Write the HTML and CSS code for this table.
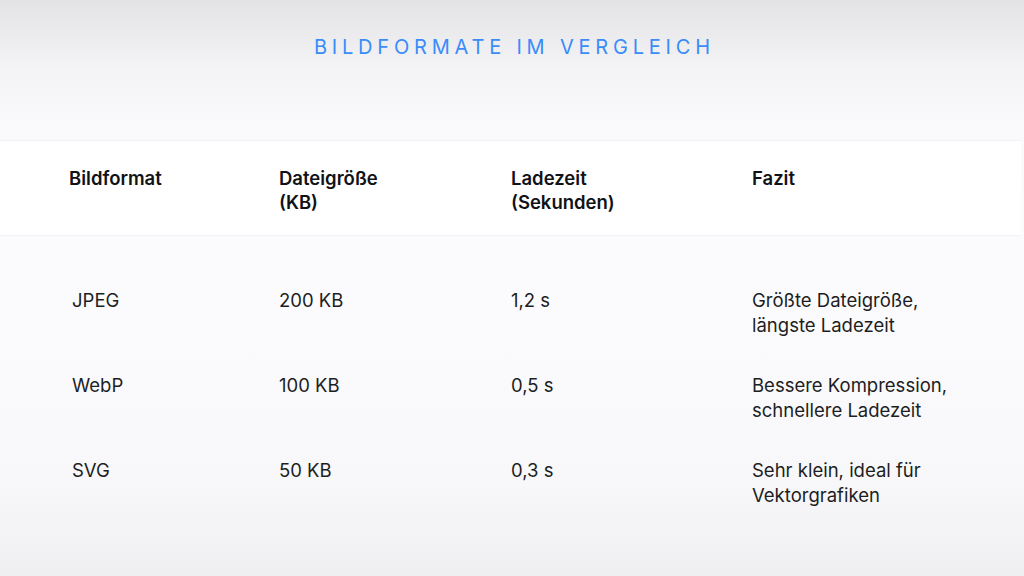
FILE: index.html
```html
<!DOCTYPE html>
<html lang="de">
<head>
<meta charset="utf-8">
<title>Bildformate im Vergleich</title>
<link rel="stylesheet" href="styles.css">
</head>
<body>
<main class="slide">
  <h1 class="title">Bildformate im Vergleich</h1>
  <div class="table">
    <div class="row head">
      <div class="cell">Bildformat</div>
      <div class="cell">Dateigröße<br>(KB)</div>
      <div class="cell">Ladezeit<br>(Sekunden)</div>
      <div class="cell">Fazit</div>
    </div>
    <div class="body">
      <div class="row">
        <div class="cell first">JPEG</div>
        <div class="cell">200 KB</div>
        <div class="cell">1,2 s</div>
        <div class="cell">Größte Dateigröße,<br>längste Ladezeit</div>
      </div>
      <div class="row">
        <div class="cell first">WebP</div>
        <div class="cell">100 KB</div>
        <div class="cell">0,5 s</div>
        <div class="cell">Bessere Kompression,<br>schnellere Ladezeit</div>
      </div>
      <div class="row">
        <div class="cell first">SVG</div>
        <div class="cell">50 KB</div>
        <div class="cell">0,3 s</div>
        <div class="cell">Sehr klein, ideal für<br>Vektorgrafiken</div>
      </div>
    </div>
  </div>
</main>
</body>
</html>
```
FILE: styles.css
```css
html, body {
  margin: 0;
  padding: 0;
}
body {
  width: 1024px;
  height: 576px;
  overflow: hidden;
  font-family: Inter, "Liberation Sans", sans-serif;
  background: linear-gradient(to bottom, #e3e3e5 0px, #f4f4f6 70px, #fafafc 130px, #fbfbfd 300px, #f8f8fa 480px, #efeff1 576px);
}
.slide {
  display: flex;
  flex-direction: column;
  height: 576px;
}
.title {
  margin: 35px 0 0 0;
  text-align: center;
  font-size: 20px;
  line-height: 24px;
  font-weight: 400;
  letter-spacing: 4.8px;
  text-transform: uppercase;
  color: #3a8cf8;
  padding-left: 4.8px;
}
.table {
  margin-top: 81px;
}
.row {
  display: grid;
  grid-template-columns: 210px 232px 241px 1fr;
  padding-left: 69px;
}
.head {
  background: #ffffff;
  width: 1021px;
  height: 96px;
  box-sizing: border-box;
  padding-top: 25px;
  border-top: 1px solid #f2f2f4;
  border-bottom: 1px solid #f2f2f4;
  font-weight: 600;
  font-size: 18.5px;
  line-height: 24px;
  color: #111216;
}
.body {
  margin-top: 34px;
  font-size: 18.5px;
  line-height: 25px;
  color: #1d1e22;
}
.body .row {
  padding-top: 18px;
  padding-bottom: 17px;
}
.cell.first {
  padding-left: 3px;
}
```
